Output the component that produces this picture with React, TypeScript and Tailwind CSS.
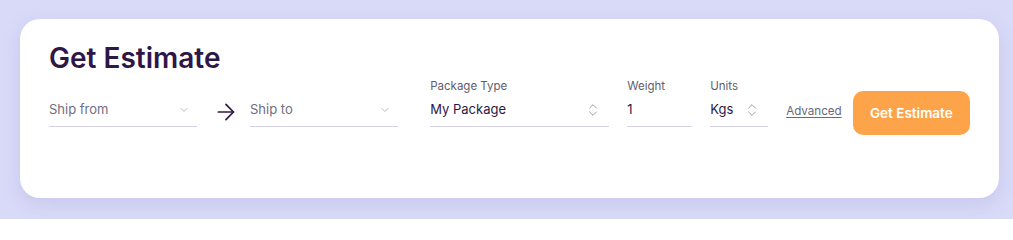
import { ArrowRight, ChevronDown, ChevronsUpDown } from "lucide-react";

const FONT = "font-['Inter','Noto_Sans',sans-serif]";

function SelectField({ placeholder, width }: { placeholder: string; width: string }) {
  return (
    <div className={`${width} h-[34px] flex items-center justify-between border-b border-[#d3d1e3]`}>
      <span className="text-[13px] text-[#6f6d80]">{placeholder}</span>
      <ChevronDown className="h-3 w-3 mr-[7px] text-[#a3a1b5]" strokeWidth={1.5} />
    </div>
  );
}

function LabeledField({
  label,
  value,
  width,
  stepper,
}: {
  label: string;
  value: string;
  width: string;
  stepper?: boolean;
}) {
  return (
    <div className={`${width} flex flex-col`}>
      <span className="text-[11.5px] leading-[14px] text-[#5f5d70]">{label}</span>
      <div className="h-[34px] flex items-center justify-between border-b border-[#d3d1e3]">
        <span className="text-[13px] text-[#2e1747]">{value}</span>
        {stepper && <ChevronsUpDown className="h-4 w-4 mr-[8px] text-[#9d9bb0]" strokeWidth={1.5} />}
      </div>
    </div>
  );
}

export default function App() {
  return (
    <div className={`w-[1013px] h-[219px] bg-[#d9d9f8] pt-[19px] pl-[20px] ${FONT}`}>
      <div className="h-[179px] w-[979px] bg-white rounded-[20px] shadow-[0_6px_18px_rgba(120,120,190,0.18)] px-[29px] pt-[22px]">
        <h1 className="text-[28px] leading-[34px] font-semibold text-[#2e1747]">Get Estimate</h1>
        <div className="flex items-end mt-[4px]">
          <SelectField placeholder="Ship from" width="w-[149px]" />
          <ArrowRight className="h-[26px] w-[26px] ml-[16px] mr-[11px] mb-[2px] text-[#2e1747]" strokeWidth={1.6} />
          <SelectField placeholder="Ship to" width="w-[149px]" />
          <div className="ml-[32px]">
            <LabeledField label="Package Type" value="My Package" width="w-[179px]" stepper />
          </div>
          <div className="ml-[18px]">
            <LabeledField label="Weight" value="1" width="w-[65px]" />
          </div>
          <div className="ml-[18px]">
            <LabeledField label="Units" value="Kgs" width="w-[58px]" stepper />
          </div>
          <a className="ml-[18px] mb-[7px] text-[11.6px] text-[#6a6879] underline underline-offset-2 cursor-pointer">
            Advanced
          </a>
          <button className="ml-[11px] -mb-[8px] w-[118px] h-[44px] rounded-[10px] bg-[#fda44b] text-white text-[13.5px] font-semibold">
            Get Estimate
          </button>
        </div>
      </div>
    </div>
  );
}
